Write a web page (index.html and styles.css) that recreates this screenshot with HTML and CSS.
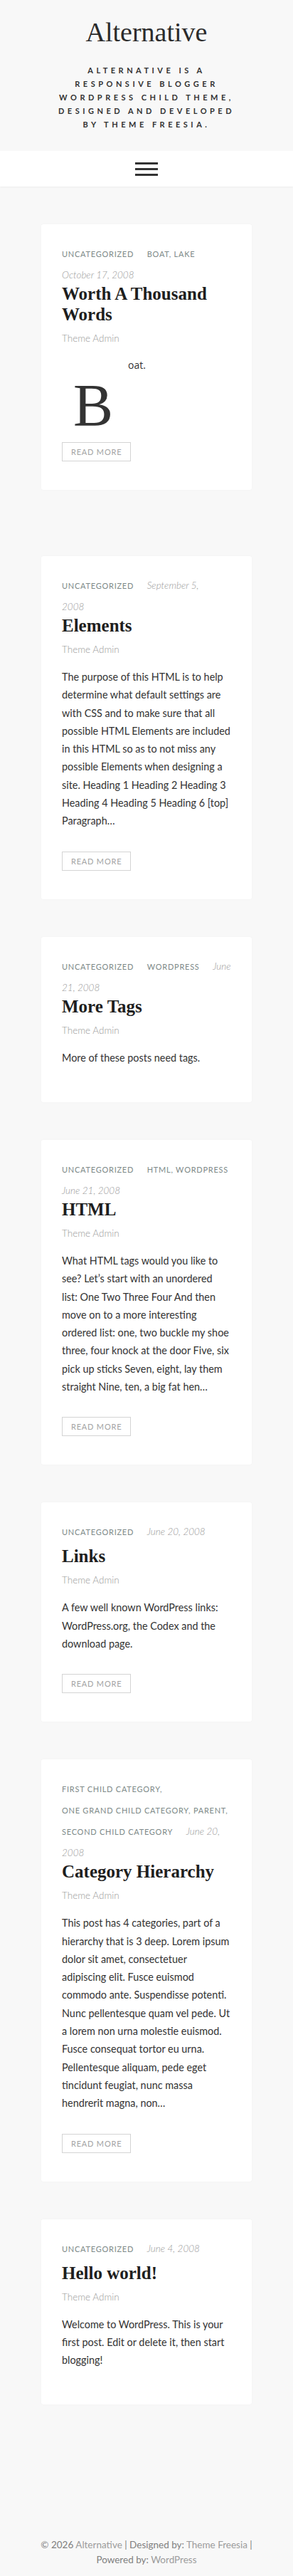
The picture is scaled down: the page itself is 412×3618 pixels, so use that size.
FILE: index.html
```html
<!DOCTYPE html>
<html lang="en">
<head>
<meta charset="utf-8">
<meta name="viewport" content="width=device-width, initial-scale=1">
<title>Alternative</title>
<link rel="stylesheet" href="styles.css">
</head>
<body>
<header class="site-header">
  <h1 class="site-title">Alternative</h1>
  <p class="site-description">Alternative is a responsive blogger WordPress child theme, designed and developed by Theme Freesia.</p>
</header>
<nav class="main-nav">
  <button class="menu-toggle" aria-label="Menu"><span></span><span></span><span></span></button>
</nav>
<main class="posts">
  <article class="post post--first">
    <div class="entry-meta"><span class="cat">Uncategorized</span><span class="sep"> </span><span class="cat">Boat, Lake</span><span class="sep"> </span><span class="posted-on">October 17, 2008</span></div>
    <h2 class="entry-title">Worth A Thousand Words</h2>
    <div class="byline">Theme Admin</div>
    <div class="entry-content">
      <p class="oat">oat.</p>
      <div class="dropcap">B</div>
    </div>
    <div class="more-wrap"><a class="more-link" href="#">Read More</a></div>
  </article>

  <article class="post">
    <div class="entry-meta"><span class="cat">Uncategorized</span><span class="sep"> </span><span class="posted-on">September 5,<br>2008</span></div>
    <h2 class="entry-title">Elements</h2>
    <div class="byline">Theme Admin</div>
    <div class="entry-content">
      <p>The purpose of this HTML is to help determine what default settings are with CSS and to make sure that all possible HTML Elements are included in this HTML so as to not miss any possible Elements when designing a site. Heading 1 Heading 2 Heading 3 Heading 4 Heading 5 Heading 6 [top] Paragraph…</p>
    </div>
    <div class="more-wrap"><a class="more-link" href="#">Read More</a></div>
  </article>

  <article class="post">
    <div class="entry-meta"><span class="cat">Uncategorized</span><span class="sep"> </span><span class="cat">WordPress</span><span class="sep"> </span><span class="posted-on">June 21, 2008</span></div>
    <h2 class="entry-title">More Tags</h2>
    <div class="byline">Theme Admin</div>
    <div class="entry-content">
      <p>More of these posts need tags.</p>
    </div>
  </article>

  <article class="post">
    <div class="entry-meta"><span class="cat">Uncategorized</span><span class="sep"> </span><span class="cat">HTML, WordPress</span><span class="sep"> </span><span class="posted-on">June 21, 2008</span></div>
    <h2 class="entry-title">HTML</h2>
    <div class="byline">Theme Admin</div>
    <div class="entry-content">
      <p>What HTML tags would you like to see? Let’s start with an unordered<br>list: One Two Three Four And then move on to a more interesting ordered list: one, two buckle my shoe three, four knock at the door Five, six pick up sticks Seven, eight, lay them straight Nine, ten, a big fat hen…</p>
    </div>
    <div class="more-wrap"><a class="more-link" href="#">Read More</a></div>
  </article>

  <article class="post">
    <div class="entry-meta"><span class="cat">Uncategorized</span><span class="sep"> </span><span class="posted-on">June 20, 2008</span></div>
    <h2 class="entry-title">Links</h2>
    <div class="byline">Theme Admin</div>
    <div class="entry-content">
      <p>A few well known WordPress links: WordPress.org, the Codex and the download page.</p>
    </div>
    <div class="more-wrap"><a class="more-link" href="#">Read More</a></div>
  </article>

  <article class="post">
    <div class="entry-meta"><span class="cat">First Child Category,</span> <span class="cat">One Grand Child Category,</span> <span class="cat">Parent,</span> <span class="cat">Second Child Category</span><span class="sep"> </span><span class="posted-on">June 20, 2008</span></div>
    <h2 class="entry-title">Category Hierarchy</h2>
    <div class="byline">Theme Admin</div>
    <div class="entry-content">
      <p>This post has 4 categories, part of a hierarchy that is 3 deep. Lorem ipsum dolor sit amet, consectetuer adipiscing elit. Fusce euismod commodo ante. Suspendisse potenti. Nunc pellentesque quam vel pede. Ut a lorem non urna molestie euismod. Fusce consequat tortor eu urna. Pellentesque aliquam, pede eget tincidunt feugiat, nunc massa hendrerit magna, non…</p>
    </div>
    <div class="more-wrap"><a class="more-link" href="#">Read More</a></div>
  </article>

  <article class="post">
    <div class="entry-meta"><span class="cat">Uncategorized</span><span class="sep"> </span><span class="posted-on">June 4, 2008</span></div>
    <h2 class="entry-title">Hello world!</h2>
    <div class="byline">Theme Admin</div>
    <div class="entry-content">
      <p>Welcome to WordPress. This is your first post. Edit or delete it, then start blogging!</p>
    </div>
  </article>
</main>
<footer class="site-footer">
  <div class="site-info">© 2026 <a href="#">Alternative</a> | Designed by: <a href="#">Theme Freesia</a> | Powered by: <a href="#">WordPress</a></div>
</footer>
</body>
</html>
```
FILE: styles.css
```css
* { box-sizing: border-box; }

body {
  margin: 0;
  background: #f8f8f8;
  font-family: Lato, "Open Sans", "Liberation Sans", sans-serif;
  color: #333;
}

.site-header {
  padding: 22px 0 28px;
  text-align: center;
}

.site-title {
  margin: 0;
  font-family: "Liberation Serif", serif;
  font-weight: 400;
  font-size: 38px;
  line-height: 46px;
  color: #2b2b2b;
}

.site-description {
  margin: 21px auto 0;
  max-width: 266px;
  font-size: 11px;
  font-weight: 700;
  line-height: 19px;
  letter-spacing: 4.5px;
  text-transform: uppercase;
  color: #333;
}

.main-nav {
  height: 50px;
  background: #fff;
  display: flex;
  align-items: center;
  justify-content: center;
  box-shadow: 0 1px 2px rgba(0, 0, 0, 0.05);
}

.menu-toggle {
  display: flex;
  flex-direction: column;
  gap: 5px;
  width: 32px;
  padding: 0;
  border: 0;
  background: none;
}

.menu-toggle span {
  display: block;
  height: 3px;
  background: #333;
}

.posts {
  width: 296px;
  margin: 0 auto;
  padding-top: 53px;
}

.post {
  background: #fff;
  padding: 30px 28.5px 20px 29px;
  margin-bottom: 53px;
  border-radius: 3px;
  box-shadow: 0 0 3px rgba(0, 0, 0, 0.03);
}

.post--first {
  margin-bottom: 93px;
}

.entry-meta {
  font-size: 14px;
  line-height: 21px;
}

.sep {
  word-spacing: 15px;
}

.cat {
  display: inline-block;
  font-size: 11px;
  letter-spacing: 0.75px;
  text-transform: uppercase;
  color: #7d8988;
  margin-bottom: 8px;
}

.posted-on {
  font-size: 13.5px;
  font-style: italic;
  font-weight: 300;
  color: #999;
}

.entry-title {
  margin: 1px 0 0;
  font-family: "Liberation Serif", serif;
  font-weight: 700;
  font-size: 25px;
  line-height: 29px;
  color: #1e1e1e;
}

.byline {
  margin-top: 7px;
  font-size: 13.5px;
  line-height: 24px;
  font-weight: 300;
  color: #999;
}

.entry-content p {
  margin: 14px 0 30px;
  font-size: 14.4px;
  line-height: 25.3px;
  color: #333;
}

.entry-content p.oat {
  margin: 15px 0 0;
  padding-left: 93px;
  font-family: "Open Sans", sans-serif;
  font-size: 14px;
  line-height: 22px;
}

.dropcap {
  margin: 7px 0 12px;
  padding-left: 16px;
  font-family: "Liberation Serif", serif;
  font-size: 84px;
  line-height: 78px;
  color: #333;
}

.more-wrap {
  display: flex;
  margin-bottom: 20px;
}

.more-link {
  display: block;
  height: 27px;
  padding: 0 12px;
  border: 1px solid #d4d4d4;
  font-size: 11px;
  line-height: 25px;
  letter-spacing: 0.8px;
  text-transform: uppercase;
  color: #a3a3a3;
  text-decoration: none;
}

.site-footer {
  padding: 134px 0 16px;
}

.site-info {
  width: 304px;
  margin: 0 auto;
  text-align: center;
  font-size: 13.5px;
  line-height: 21px;
  color: #808080;
}

.site-info a {
  color: #9c9c9c;
  text-decoration: none;
}
```
